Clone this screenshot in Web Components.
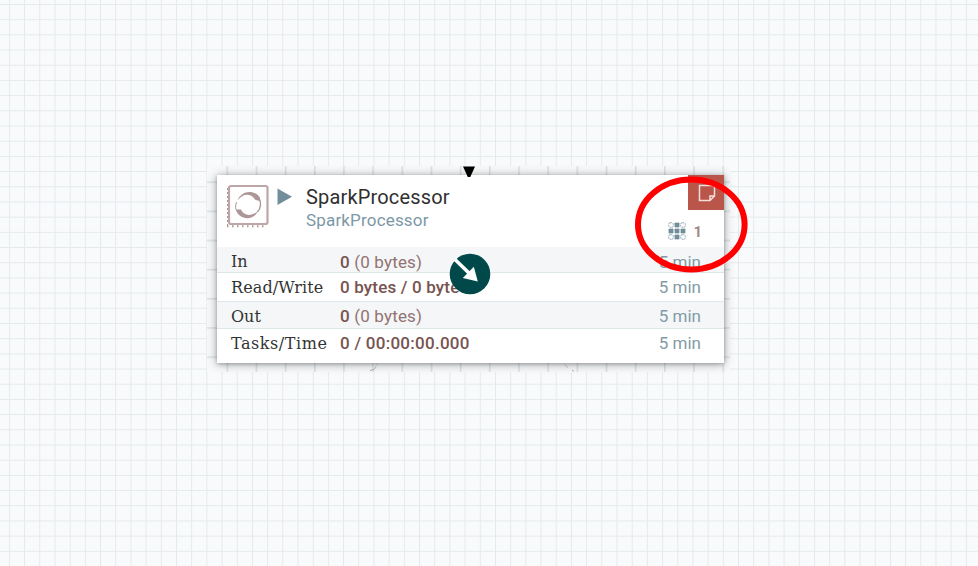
<!DOCTYPE html>
<html lang="en"><head><meta charset="utf-8"><title>Flow canvas</title>
<style>html,body{margin:0;height:100%;overflow:hidden}</style></head><body>
<flow-canvas>
 <processor-card name="SparkProcessor" type="SparkProcessor" threads="1">
  <stat-row label="In" value="0" note="(0 bytes)" style="--h:26px;--shade:#f4f6f7;--shift:2px;--label-shift:2px"></stat-row>
  <stat-row label="Read/Write" value="0 bytes / 0 bytes" style="--h:29px;--shift:0px;--track:.12px"></stat-row>
  <stat-row label="Out" value="0" note="(0 bytes)" style="--h:27px;--shade:#f4f6f7;--shift:1px"></stat-row>
  <stat-row label="Tasks/Time" value="0 / 00:00:00.000" style="--h:34px;--line:transparent;--shift:-3px;--label-shift:-2px;--track:.55px;--value-track:.27px"></stat-row>
 </processor-card>
</flow-canvas>
<script>
class FlowCanvas extends HTMLElement{
 constructor(){super();this.attachShadow({mode:'open'}).innerHTML=`
 <style>
 :host{display:block;position:relative;width:978px;height:566px;overflow:hidden;background:#f9fafc;font-family:Roboto,sans-serif}
 svg{position:absolute;left:0;top:0}
 ::slotted(processor-card){position:absolute;left:217px;top:175px}
 </style>
 <svg width="978" height="566">
  <defs>
   <pattern id="g" x="8.9" y="4" width="15.19" height="15.19" patternUnits="userSpaceOnUse"><path d="M.5 0V15.19M0 .5H15.19" stroke="#e4eaeb"/></pattern>
   <pattern id="t" x="226.500" y="181.3" width="29.17" height="29.17" patternUnits="userSpaceOnUse"><path d="M.8 0V29.17M0 .8H29.17" stroke="#d3dcdd" stroke-width="1.300"/></pattern>
  </defs>
  <rect width="978" height="566" fill="url(#g)"/>
  <rect x="207" y="166" width="523" height="206" fill="#f8f9fa"/>
  <rect x="207" y="166" width="523" height="206" fill="url(#t)"/>
 </svg>
 <slot></slot>
 <svg width="978" height="566">
  <path d="M463 166.500H475L470.300 177H467.800Z" fill="#000"/>
  <path d="M370 370.500L374 369.500L376 367M375.500 365.500L378.500 363.500M564 363.500L567.500 367.500M572 370L574 371.500" stroke="#aaa" fill="none"/>
  <circle cx="470" cy="274" r="20.300" fill="#004849"/>
  <path d="M455 259.500L471 275" stroke="#fff" stroke-width="3.600"/><path d="M477.800 281.500L462.800 278L473.800 266.800Z" fill="#fff"/>
  <ellipse cx="691.300" cy="224.500" rx="53.300" ry="45" fill="none" stroke="#f00" stroke-width="6"/>
 </svg>`}
}
class ProcessorCard extends HTMLElement{
 constructor(){super();const a=n=>this.getAttribute(n);
 let dots='';for(let r=0;r<3;r++)for(let c=0;c<3;c++){const solid=r===1||c===1;dots+=`<rect x="${.7+c*6}" y="${.7+r*6}" width="4.600" height="4.600" rx="${solid?.6:1.6}" fill="${solid?'#728e9b':'none'}" stroke="#728e9b" stroke-width="${solid?.2:1}" stroke-opacity=".8" ${solid?'':'stroke-dasharray="1.8 .7"'}/>`}
 this.attachShadow({mode:'open'}).innerHTML=`
 <style>
 :host{display:flex;flex-direction:column;box-sizing:border-box;width:507px;height:188px;background:#fff;box-shadow:0 1px 10px rgba(0,0,0,.3),0 1px 4px rgba(0,0,0,.25)}
 header{display:flex;height:72px;flex:none}
 .icon{margin:9px 0 0 9px;width:44px;height:44px;flex:none}
 .run{margin:13px 0 0 7px;width:16px;height:18px;flex:none}
 .names{margin:10px 0 0 13px;flex:1;white-space:nowrap}
 .name{font-size:20px;line-height:24px;color:#303030;letter-spacing:.17px}
 .type{font-size:17px;line-height:21px;margin-top:1px;color:#7c98a6;letter-spacing:.17px}
 .side{width:80px;display:flex;flex-direction:column;align-items:flex-end}
 .bulletin{width:36px;height:35px;background:#ba554a;display:flex}
 .bulletin svg{margin:9px 0 0 10px}
 .threads{display:flex;align-items:center;gap:7px;margin:11px 22px 0 0;color:#a58787;font:bold 15px/20px Roboto,sans-serif}
 .threads span{position:relative;top:1px}
 svg{display:block}
 </style>
 <header>
  <svg class="icon" viewBox="0 0 44 44" fill="none" stroke="#ad9796">
   <rect x="3" y="2" width="38.500" height="38" rx="2" stroke="#bda7a6" stroke-width="2.200"/>
   <path d="M1.500 4V42" stroke-dasharray="2 2"/><path d="M1 42.300H39" stroke-width="2" stroke-dasharray="1.500 3.500"/>
   <path d="M11.500 16.500C15 6.500 28 5 34 13.500L34 17L29.500 16C25 9 17 9 11.500 16.500Z" fill="#ad9796" stroke="none"/>
   <path d="M33 14.500C35.500 18 35 24 31.500 28" stroke-width="1.400"/>
   <path d="M32 27C28 36 16 36.500 11 28.500L10.500 25.500L15 25.500C18 32.500 26 32.500 32 27Z" fill="#ad9796" stroke="none"/>
   <path d="M10.500 18C9 22 9.500 26 11.500 28" stroke-width="1"/>
  </svg>
  <svg class="run" viewBox="0 0 16 18"><path d="M.5 .5L15 8.800L.5 17Z" fill="#728e9b"/></svg>
  <div class="names"><div class="name">${a('name')}</div><div class="type">${a('type')}</div></div>
  <div class="side"><div class="bulletin"><svg width="19" height="19" fill="none" stroke="#f4dfdc" stroke-width="1.500"><path d="M1.500 1.500H16.500V12L12 16.500H1.500ZM12 16V12H16.500"/></svg></div>
  <div class="threads"><svg width="18" height="18">${dots}</svg><span>${a('threads')}</span></div></div>
 </header><slot></slot>`}
}
class StatRow extends HTMLElement{
 constructor(){super();const a=n=>this.getAttribute(n)||'';
 this.attachShadow({mode:'open'}).innerHTML=`
 <style>
 :host{display:grid;grid-template-columns:109px 1fr auto;align-items:center;box-sizing:border-box;height:var(--h);padding:0 23px 0 14px;background:var(--shade,#fff);border-bottom:1px solid var(--line,#dfe6e8);font-size:17px;white-space:nowrap}
 span{position:relative;top:var(--shift)}
 .label{font-family:"DejaVu Serif",serif;font-size:16px;color:#333;top:var(--label-shift,var(--shift));letter-spacing:var(--track,0)}
 b{font-weight:500;color:#775351}.value{color:#927372;letter-spacing:var(--value-track,.17px)}.age{color:#829ba7}
 </style><span class="label">${a('label')}</span><span class="value"><b>${a('value')}</b> ${a('note')}</span><span class="age">5 min</span>`}
}
customElements.define('flow-canvas',FlowCanvas);customElements.define('processor-card',ProcessorCard);customElements.define('stat-row',StatRow);
</script></body></html>
